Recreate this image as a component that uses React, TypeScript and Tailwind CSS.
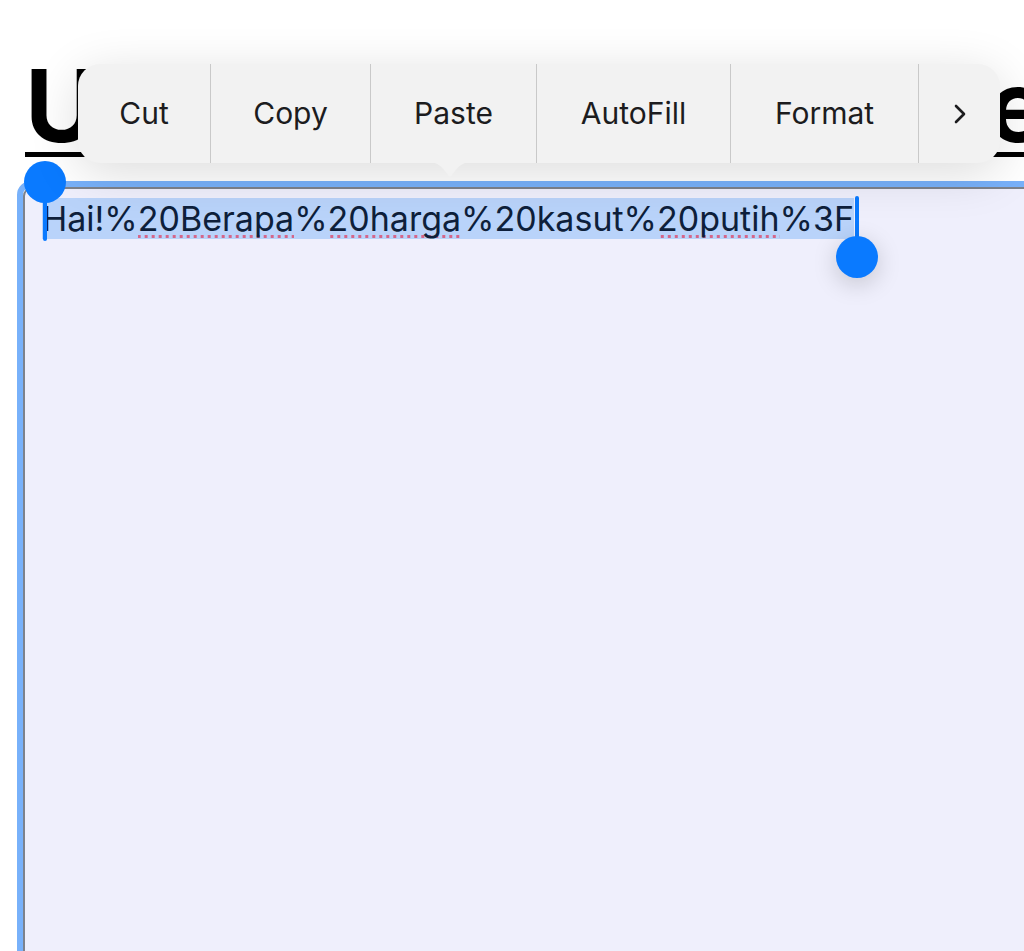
import React from 'react';

const font = { fontFamily: 'Inter, "Noto Sans", sans-serif' };

const menuItems = [
  { label: 'Cut', width: 'w-[133px]' },
  { label: 'Copy', width: 'w-[160px]' },
  { label: 'Paste', width: 'w-[166px]' },
  { label: 'AutoFill', width: 'w-[194px]' },
  { label: 'Format', width: 'w-[188px]' },
];

const misspelt =
  'bg-[radial-gradient(circle,#d4668a_1.5px,transparent_2px)] bg-[length:7px_5px] bg-repeat-x bg-bottom';

function Handle({ className, up }: { className: string; up?: boolean }) {
  return (
    <div className={`absolute flex w-[42px] flex-col items-center ${className}`}>
      {up && <div className="h-[42px] w-[42px] rounded-full bg-[#0a7aff]" />}
      <div className={`w-[4px] rounded-full bg-[#0a7aff] ${up ? '-mt-[22px] h-[60px]' : 'h-[62px] -mb-[22px]'}`} />
      {!up && <div className="h-[42px] w-[42px] rounded-full bg-[#0a7aff] shadow-[0_6px_24px_rgba(0,0,0,0.18)]" />}
    </div>
  );
}

export default function App() {
  return (
    <div className="relative h-[951px] w-[1024px] overflow-hidden bg-white" style={font}>
      <h1 className="mt-[56px] whitespace-nowrap pl-[25px] text-[100px] font-bold leading-[100px] tracking-[3px] text-black underline decoration-[5px] underline-offset-[10px]">
        Url Encoder Decode
      </h1>

      <div className="ml-[17px] mt-[25px] h-[790px] w-[1040px] rounded-tl-[14px] border-[6px] border-[#78b1fa]">
        <div className="h-full rounded-tl-[9px] border-2 border-[#7d828c] bg-[#efeffc] pl-[17px] pt-[8px]">
          <p className="text-[34px] leading-[44px] text-[#0e1f3b]">
            <span className="bg-[#b9d3fa]">
              Hai!%<span className={misspelt}>20Berapa</span>%<span className={misspelt}>20harga</span>%20kasut%
              <span className={misspelt}>20putih</span>%3F
            </span>
          </p>
        </div>
      </div>

      <Handle up className="left-[24px] top-[161px]" />
      <Handle className="left-[836px] top-[196px]" />

      <div className="absolute left-[78px] top-[64px] flex h-[99px] w-[922px] items-stretch rounded-[22px] bg-[#f2f2f2] shadow-[0_10px_50px_rgba(0,0,0,0.14)]">
        {menuItems.map((item) => (
          <div
            key={item.label}
            className={`flex ${item.width} items-center justify-center border-r border-[#c9c9c9] text-[30px] text-[#1c1c1e]`}
          >
            {item.label}
          </div>
        ))}
        <div className="flex flex-1 items-center justify-center">
          <svg width="16" height="22" viewBox="0 0 16 22" fill="none">
            <path d="M4 3l8 8-8 8" stroke="#1c1c1e" strokeWidth="2.6" strokeLinecap="round" strokeLinejoin="round" />
          </svg>
        </div>
        <svg className="absolute left-[350px] top-[98px]" width="44" height="17" viewBox="0 0 44 17">
          <path d="M0 0 H44 C36 0 32 3 27 9 L24 13 C23 15 21 15 20 13 L17 9 C12 3 8 0 0 0 Z" fill="#f2f2f2" />
        </svg>
      </div>
    </div>
  );
}
